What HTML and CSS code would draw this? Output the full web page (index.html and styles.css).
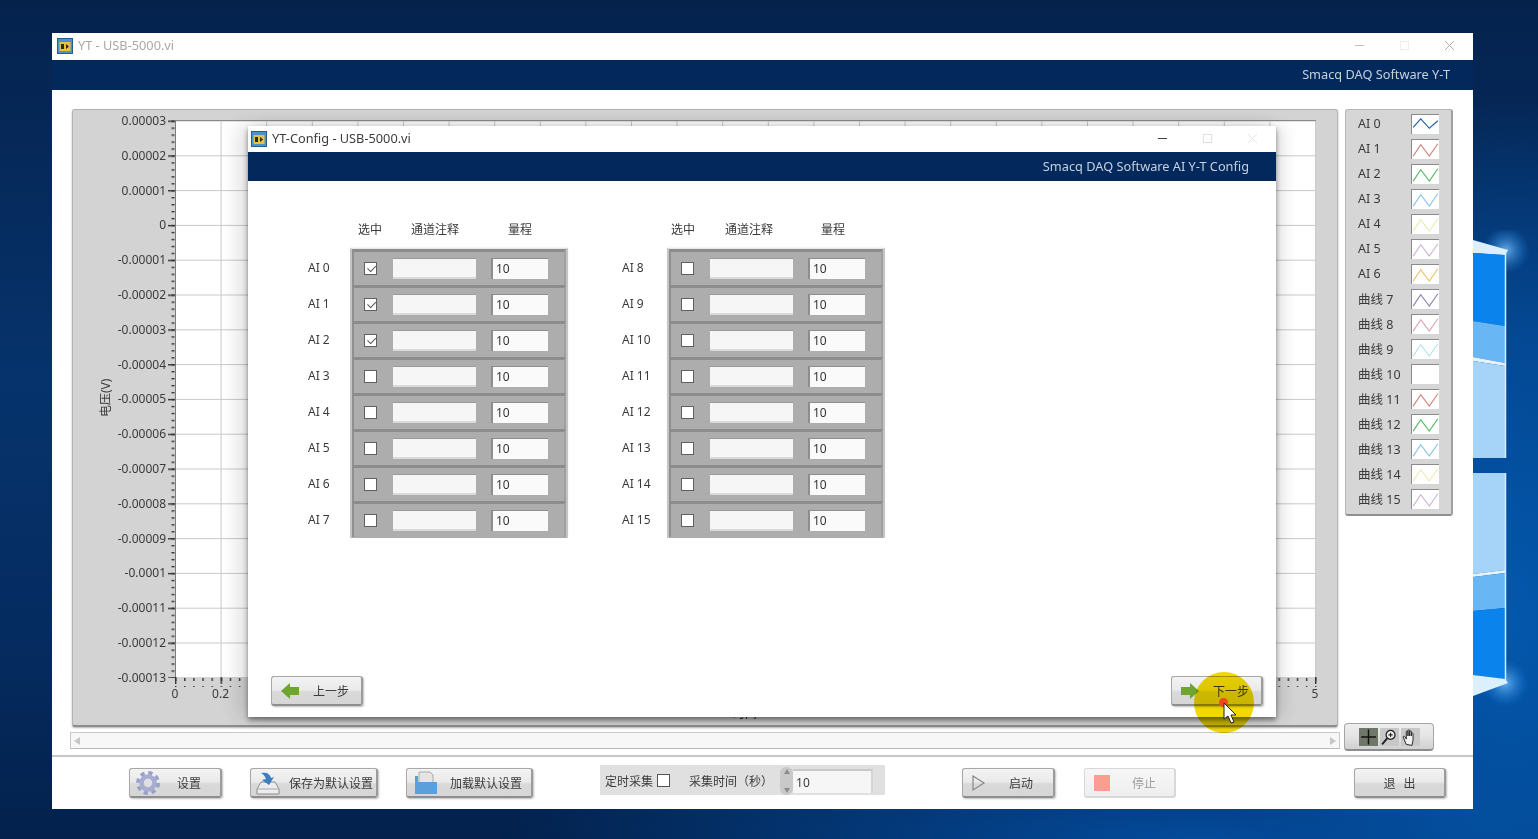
FILE: index.html
```html
<!DOCTYPE html>
<html lang="zh">
<head>
<meta charset="utf-8">
<title>YT - USB-5000.vi</title>
<link rel="stylesheet" href="styles.css">
</head>
<body>
<div class="desktop">
  <svg class="win-logo" viewBox="0 0 65 490" width="65" height="490">
    <defs>
      <radialGradient id="glow"><stop offset="0" stop-color="#7cc4fc" stop-opacity=".8"/><stop offset="1" stop-color="#1a7fe0" stop-opacity="0"/></radialGradient>
    </defs>
    <circle cx="33" cy="20" r="24" fill="url(#glow)"/>
    <circle cx="32" cy="453" r="24" fill="url(#glow)"/>
    <polygon points="0,10 35,20 32,25 0,23" fill="#dceffd"/>
    <polygon points="0,23 32,25 32,96 0,91" fill="#0a83ec"/>
    <polygon points="0,91 32,96 32,133 0,127" fill="#69b6f4"/>
    <polygon points="0,127 32,133 32,136 0,131" fill="#e4f3fe"/>
    <polygon points="0,131 32,136 32,228 0,228" fill="#a6d3f8"/>
    <polygon points="0,243 32,243 32,340 0,344" fill="#a6d3f8"/>
    <polygon points="0,344 32,340 32,343 0,347" fill="#e4f3fe"/>
    <polygon points="0,347 32,343 32,378 0,381" fill="#69b6f4"/>
    <polygon points="0,381 32,378 32,449 0,445" fill="#0a83ec"/>
    <polygon points="0,445 32,449 35,453 0,466" fill="#dceffd"/>
    <path d="M32.500 22V228M32.500 243V452" stroke="#d6edfd" stroke-width="1.500"/>
  </svg>

  <section class="window main-window">
    <header class="titlebar">
      <svg class="vi-icon" viewBox="0 0 16 16"><rect x=".5" y=".5" width="15" height="15" fill="#4b93c9" stroke="#1f5f94"/><rect x="2.5" y="4" width="11" height="9" fill="#e8c23a"/><path d="M4 6h3v5H4zM9 6l3 2.5L9 11z" fill="#2b2b20"/></svg>
      <span class="title-text faded">YT - USB-5000.vi</span>
      <div class="win-controls faded-controls">
        <svg viewBox="0 0 12 12"><path d="M1 6h10" stroke="#b9b9b9" stroke-width="1"/></svg>
        <svg viewBox="0 0 12 12"><rect x="1.5" y="1.5" width="9" height="9" fill="none" stroke="#ececec"/></svg>
        <svg viewBox="0 0 12 12"><path d="M1 1l10 10M11 1L1 11" stroke="#a9a9a9" stroke-width="1"/></svg>
      </div>
    </header>
    <div class="brandbar">Smacq DAQ Software Y-T</div>

    <div class="main-body">
      <div class="graph-row">
        <div class="graph-col">
          <div class="graph-panel">
            <div class="y-title">电压(V)</div>
            <div class="y-labels">
              <span>0.00003</span><span>0.00002</span><span>0.00001</span><span>0</span>
              <span>-0.00001</span><span>-0.00002</span><span>-0.00003</span><span>-0.00004</span>
              <span>-0.00005</span><span>-0.00006</span><span>-0.00007</span><span>-0.00008</span>
              <span>-0.00009</span><span>-0.0001</span><span>-0.00011</span><span>-0.00012</span>
              <span>-0.00013</span>
            </div>
            <div class="plot-wrap">
              <svg class="plot" viewBox="0 0 1150 568" width="1150" height="568">
                <defs>
                  <pattern id="grid" x="8" y="0.5" width="45.6" height="34.8" patternUnits="userSpaceOnUse">
                    <path d="M.5 0V34.8M0 .5H45.6" stroke="#c9c9c9" fill="none"/>
                  </pattern>
                  <pattern id="ytick" x="0" y="0.5" width="8" height="6.96" patternUnits="userSpaceOnUse">
                    <path d="M4.5 0h3v1.4h-3z" fill="#333"/>
                  </pattern>
                  <pattern id="xtick" x="8" y="557" width="9.12" height="8" patternUnits="userSpaceOnUse">
                    <path d="M0 1h1.4v3H0z" fill="#333"/>
                  </pattern>
                  <pattern id="ymajor" x="0" y="0.5" width="8" height="34.8" patternUnits="userSpaceOnUse">
                    <path d="M1 0h7v1.4H1z" fill="#333"/>
                  </pattern>
                  <pattern id="xmajor" x="8" y="557" width="45.6" height="10" patternUnits="userSpaceOnUse">
                    <path d="M0 0h1.4v7H0z" fill="#333"/>
                  </pattern>
                </defs>
                <rect x="8" y="0" width="1141" height="557" fill="#fff"/>
                <rect x="8" y="0" width="1141" height="557" fill="url(#grid)"/>
                <path d="M8.5 0V557" stroke="#7d7d7d"/>
                <path d="M8 .5H1149" stroke="#8a8a8a"/>
                <rect x="0" y="0" width="8" height="558" fill="url(#ytick)"/>
                <rect x="0" y="0" width="8" height="558" fill="url(#ymajor)"/>
                <rect x="8" y="557" width="1142" height="10" fill="url(#xtick)"/>
                <rect x="8" y="557" width="1142" height="10" fill="url(#xmajor)"/>
              </svg>
              <div class="x-labels"><span>0</span><span>0.2</span><span class="x-end">5</span><span class="x-title">时间</span></div>
            </div>
          </div>
          <div class="hscroll">
            <span class="arrow-left"></span>
            <span class="arrow-right"></span>
          </div>
        </div>

        <div class="side-col">
          <div class="legend">
            <div class="legend-row"><span>AI 0</span><svg class="swatch" viewBox="0 0 28 20"><path class="trace" stroke="#1f5f9e" d="M1 13 9 4l9 10 9-8"/></svg></div>
            <div class="legend-row"><span>AI 1</span><svg class="swatch" viewBox="0 0 28 20"><path class="trace" stroke="#d0827c" d="M1 17 9 5l9 12 9-13"/></svg></div>
            <div class="legend-row"><span>AI 2</span><svg class="swatch" viewBox="0 0 28 20"><path class="trace" stroke="#55b865" d="M1 17 9 5l9 12 9-13"/></svg></div>
            <div class="legend-row"><span>AI 3</span><svg class="swatch" viewBox="0 0 28 20"><path class="trace" stroke="#87c4e4" d="M1 17 9 5l9 12 9-13"/></svg></div>
            <div class="legend-row"><span>AI 4</span><svg class="swatch" viewBox="0 0 28 20"><path class="trace" stroke="#ecebb4" d="M1 17 9 5l9 12 9-13"/></svg></div>
            <div class="legend-row"><span>AI 5</span><svg class="swatch" viewBox="0 0 28 20"><path class="trace" stroke="#cdb5d6" d="M1 17 9 5l9 12 9-13"/></svg></div>
            <div class="legend-row"><span>AI 6</span><svg class="swatch" viewBox="0 0 28 20"><path class="trace" stroke="#e8c56a" d="M1 17 9 5l9 12 9-13"/></svg></div>
            <div class="legend-row"><span>曲线 7</span><svg class="swatch" viewBox="0 0 28 20"><path class="trace" stroke="#8585b0" d="M1 17 9 5l9 12 9-13"/></svg></div>
            <div class="legend-row"><span>曲线 8</span><svg class="swatch" viewBox="0 0 28 20"><path class="trace" stroke="#d8a3b8" d="M1 17 9 5l9 12 9-13"/></svg></div>
            <div class="legend-row"><span>曲线 9</span><svg class="swatch" viewBox="0 0 28 20"><path class="trace" stroke="#b5e2ea" d="M1 17 9 5l9 12 9-13"/></svg></div>
            <div class="legend-row"><span>曲线 10</span><svg class="swatch" viewBox="0 0 28 20"></svg></div>
            <div class="legend-row"><span>曲线 11</span><svg class="swatch" viewBox="0 0 28 20"><path class="trace" stroke="#d0827c" d="M1 17 9 5l9 12 9-13"/></svg></div>
            <div class="legend-row"><span>曲线 12</span><svg class="swatch" viewBox="0 0 28 20"><path class="trace" stroke="#55b865" d="M1 17 9 5l9 12 9-13"/></svg></div>
            <div class="legend-row"><span>曲线 13</span><svg class="swatch" viewBox="0 0 28 20"><path class="trace" stroke="#87c4e4" d="M1 17 9 5l9 12 9-13"/></svg></div>
            <div class="legend-row"><span>曲线 14</span><svg class="swatch" viewBox="0 0 28 20"><path class="trace" stroke="#ecebb4" d="M1 17 9 5l9 12 9-13"/></svg></div>
            <div class="legend-row"><span>曲线 15</span><svg class="swatch" viewBox="0 0 28 20"><path class="trace" stroke="#cdb5d6" d="M1 17 9 5l9 12 9-13"/></svg></div>
          </div>
          <div class="palette">
            <svg class="tool tool-on" viewBox="0 0 18 16"><path d="M9 1v14M2 8h14" stroke="#111" stroke-width="1.4"/></svg>
            <svg class="tool" viewBox="0 0 18 16"><circle cx="10" cy="6" r="4.2" fill="#eee" stroke="#222" stroke-width="1.2"/><path d="M7 9l-5 6" stroke="#222" stroke-width="1.8"/><path d="M8 6h4M10 4v4" stroke="#222"/></svg>
            <svg class="tool" viewBox="0 0 18 16"><path d="M5 15 2 8c0-1 1-1 2 0l1 2V3c0-1 1.600-1 1.600 0v4-5c0-1 1.600-1 1.600 0v5-4c0-1 1.600-1 1.600 0v4-2c0-1 1.600-1 1.600 0v6l-1 5z" fill="#f2f2f2" stroke="#222" stroke-width=".9"/></svg>
          </div>
        </div>
      </div>

      <footer class="toolbar">
        <button class="btn btn-settings">
          <svg class="btn-icon" viewBox="0 0 24 24"><circle cx="12" cy="12" r="10" fill="none" stroke="#9aa1c9" stroke-width="4" stroke-dasharray="4.200 3.650"/><circle cx="12" cy="12" r="6.500" fill="none" stroke="#a7add0" stroke-width="4.500"/><circle cx="12" cy="12" r="3.500" fill="#dedfe6"/></svg>
          <span class="btn-label">设置</span>
        </button>
        <button class="btn btn-save">
          <svg class="btn-icon" viewBox="0 0 24 24"><path d="M5 11 1 18v5h22v-5l-4-7z" fill="#ececec" stroke="#8a8a8a"/><path d="M2 18h20" stroke="#aaa"/><path d="M5 2c6-1 9 1 10 5l3-1-5 8-7-5 4-1C9 5 7 3 5 2z" fill="#3f7fc0"/></svg>
          <span class="btn-label">保存为默认设置</span>
        </button>
        <button class="btn btn-load">
          <svg class="btn-icon" viewBox="0 0 24 24"><path d="M5 1h11l3 3v9H5z" fill="#e4e4e4" stroke="#aaa"/><path d="M1 5h3v6h19v12H1z" fill="#5b9fdc"/></svg>
          <span class="btn-label">加载默认设置</span>
        </button>
        <div class="timer-box">
          <label class="timer-label">定时采集<span class="check"></span></label>
          <span class="timer-time">采集时间（秒）</span>
          <span class="spinner"><i class="up"></i><i class="down"></i></span>
          <span class="timer-input">10</span>
        </div>
        <button class="btn btn-start">
          <svg class="btn-icon small" viewBox="0 0 16 18"><path d="M2 2l11 7-11 7z" fill="none" stroke="#888" stroke-width="1.200"/></svg>
          <span class="btn-label">启动</span>
        </button>
        <button class="btn btn-stop">
          <span class="stop-square"></span>
          <span class="btn-label">停止</span>
        </button>
        <button class="btn btn-exit"><span class="btn-label">退 出</span></button>
      </footer>
    </div>
  </section>

  <section class="window config-window">
    <header class="titlebar config-title">
      <svg class="vi-icon" viewBox="0 0 16 16"><rect x=".5" y=".5" width="15" height="15" fill="#4b93c9" stroke="#1f5f94"/><rect x="2.5" y="4" width="11" height="9" fill="#e8c23a"/><path d="M4 6h3v5H4zM9 6l3 2.5L9 11z" fill="#2b2b20"/></svg>
      <span class="title-text">YT-Config - USB-5000.vi</span>
      <div class="win-controls">
        <svg viewBox="0 0 12 12"><path d="M1 6h10" stroke="#333" stroke-width="1"/></svg>
        <svg viewBox="0 0 12 12"><rect x="1.500" y="1.500" width="9" height="9" fill="none" stroke="#dcdcdc"/></svg>
        <svg viewBox="0 0 12 12"><path d="M1 1l10 10M11 1L1 11" stroke="#e0e0e0" stroke-width="1"/></svg>
      </div>
    </header>
    <div class="brandbar config-brand">Smacq DAQ Software AI Y-T Config</div>

    <div class="config-body">
      <div class="channel-groups">
        <div class="channel-group">
          <div class="labels-col">
            <span>AI 0</span><span>AI 1</span><span>AI 2</span><span>AI 3</span><span>AI 4</span><span>AI 5</span><span>AI 6</span><span>AI 7</span>
          </div>
          <div class="table-col">
            <div class="table-head"><span class="h-sel">选中</span><span class="h-note">通道注释</span><span class="h-range">量程</span></div>
            <div class="table">
              <div class="row"><span class="cb on"></span><span class="note"></span><span class="range">10</span></div>
              <div class="row"><span class="cb on"></span><span class="note"></span><span class="range">10</span></div>
              <div class="row"><span class="cb on"></span><span class="note"></span><span class="range">10</span></div>
              <div class="row"><span class="cb"></span><span class="note"></span><span class="range">10</span></div>
              <div class="row"><span class="cb"></span><span class="note"></span><span class="range">10</span></div>
              <div class="row"><span class="cb"></span><span class="note"></span><span class="range">10</span></div>
              <div class="row"><span class="cb"></span><span class="note"></span><span class="range">10</span></div>
              <div class="row"><span class="cb"></span><span class="note"></span><span class="range">10</span></div>
            </div>
          </div>
        </div>
        <div class="channel-group group-right">
          <div class="labels-col">
            <span>AI 8</span><span>AI 9</span><span>AI 10</span><span>AI 11</span><span>AI 12</span><span>AI 13</span><span>AI 14</span><span>AI 15</span>
          </div>
          <div class="table-col">
            <div class="table-head"><span class="h-sel">选中</span><span class="h-note">通道注释</span><span class="h-range">量程</span></div>
            <div class="table">
              <div class="row"><span class="cb"></span><span class="note"></span><span class="range">10</span></div>
              <div class="row"><span class="cb"></span><span class="note"></span><span class="range">10</span></div>
              <div class="row"><span class="cb"></span><span class="note"></span><span class="range">10</span></div>
              <div class="row"><span class="cb"></span><span class="note"></span><span class="range">10</span></div>
              <div class="row"><span class="cb"></span><span class="note"></span><span class="range">10</span></div>
              <div class="row"><span class="cb"></span><span class="note"></span><span class="range">10</span></div>
              <div class="row"><span class="cb"></span><span class="note"></span><span class="range">10</span></div>
              <div class="row"><span class="cb"></span><span class="note"></span><span class="range">10</span></div>
            </div>
          </div>
        </div>
      </div>
      <div class="config-actions">
        <button class="btn btn-nav">
          <svg class="arrow-icon" viewBox="0 0 20 18"><path d="M1 9 10 1v4h9v8h-9v4z" fill="#6da52f"/></svg>
          <span class="btn-label">上一步</span>
        </button>
        <button class="btn btn-nav">
          <svg class="arrow-icon" viewBox="0 0 20 18"><path d="M19 9 10 1v4H1v8h9v4z" fill="#6da52f"/></svg>
          <span class="btn-label">下一步</span>
        </button>
      </div>
    </div>
  </section>

  <div class="cursor-spot"></div>
  <span class="cursor-dot"></span>
  <svg class="cursor-arrow" viewBox="0 0 14 22"><path d="M1 1v16l4-3 3 7 3-1-3-7h5z" fill="#fff" stroke="#222"/></svg>
</div>
</body>
</html>
```

FILE: styles.css
```css
* { box-sizing: border-box; }
html, body { margin: 0; height: 100%; }
body { overflow: hidden; font-family: "Noto Sans", "Noto Sans CJK SC", sans-serif; color: #333; }

.desktop {
  position: relative;
  width: 1538px;
  height: 839px;
  overflow: hidden;
  background:
    radial-gradient(ellipse 300px 520px at 1510px 620px, #0358ad 0%, rgba(3,78,158,.8) 55%, rgba(3,60,130,0) 100%),
    radial-gradient(ellipse 700px 120px at 1200px 839px, rgba(3,80,165,.9) 0%, rgba(3,70,150,0) 100%),
    linear-gradient(180deg, #05224d 0%, #06336c 45%, #052c61 75%, #03214c 100%);
  filter: blur(.45px);
}

.win-logo { position: absolute; left: 1473px; top: 230px; filter: blur(.5px); }

.window { position: absolute; background: #fff; display: flex; flex-direction: column; }
.main-window { left: 52px; top: 33px; width: 1421px; height: 776px; }
.config-window { left: 248px; top: 126px; width: 1028px; height: 591px; box-shadow: -10px 0 18px rgba(0,0,0,.12), 0 3px 5px rgba(0,0,0,.45), 8px 0 14px rgba(0,0,0,.1); }

.titlebar { height: 27px; flex: none; display: flex; align-items: center; padding-left: 5px; padding-bottom: 3px; background: #fff; }
.config-title { height: 26px; padding-left: 3px; padding-bottom: 2px; }
.titlebar .vi-icon { margin-top: 2px; }
.vi-icon { width: 16px; height: 16px; flex: none; }
.title-text { margin-left: 5px; font-size: 12.75px; color: #3d3d3d; }
.title-text.faded { color: #a9a9a9; }
.win-controls { margin-left: auto; display: flex; gap: 34px; padding-right: 18px; }
.win-controls svg { width: 11px; height: 11px; }
.config-title .win-controls { padding-right: 18px; }

.brandbar {
  height: 30px; flex: none; background: #02285c;
  color: #c6d0dc; font-size: 12.75px; line-height: 29px; text-align: right; padding-right: 23px;
}
.config-brand { height: 29px; padding-right: 27px; line-height: 29px; }

.main-body { flex: 1; display: flex; flex-direction: column; padding-top: 19px; }
.graph-row { display: flex; padding-left: 18px; height: 646px; flex: none; }
.graph-col { width: 1270px; display: flex; flex-direction: column; }

.graph-panel {
  margin-left: 2px; width: 1266px; height: 618px; flex: none;
  background: #d4d3d4;
  border-radius: 3px;
  border: 1px solid #b4b4b4;
  border-bottom: 2px solid #8d8d8d;
  box-shadow: 0 1px 2px rgba(0,0,0,.3);
  display: flex;
  align-items: flex-start;
  padding-top: 10px;
  position: relative;
}
.y-title {
  width: 22px; margin-left: 23px; margin-top: 256px; flex: none;
  writing-mode: vertical-rl; text-orientation: sideways; transform: rotate(180deg);
  font-size: 12px; color: #3a3a3a; text-align: center; height: 44px; white-space: nowrap;
}
.y-labels { width: 48px; flex: none; display: flex; flex-direction: column; align-items: flex-end; margin-top: -8px; }
.y-labels span { height: 34.8px; line-height: 18px; font-size: 12px; color: #3a3a3a; flex: none; }
.plot-wrap { width: 1150px; flex: none; margin-left: 1px; }
.plot { display: block; }
.x-labels { position: relative; height: 16px; font-size: 12px; color: #3a3a3a; margin-top: -3px; }
.x-labels span { position: absolute; top: 0; transform: translateX(-50%); left: 8px; }
.x-labels span:nth-child(2) { left: 53.6px; }
.x-labels .x-end { left: 1148px; }
.x-labels .x-title { left: 578px; top: 19px; white-space: nowrap; }

.hscroll {
  margin-top: 5px; height: 17px; width: 1270px; flex: none;
  background: #f7f7f7; border: 1px solid #c9c9c9;
  border-bottom: 1.500px solid #bbb;
  display: flex; justify-content: space-between; align-items: center; padding: 0 3px;
}
.arrow-left { width: 0; height: 0; border: 4px solid transparent; border-right: 6px solid #c6c6c6; border-left: 0; }
.arrow-right { width: 0; height: 0; border: 4px solid transparent; border-left: 6px solid #c6c6c6; border-right: 0; }

.side-col { margin-left: 5px; width: 108px; display: flex; flex-direction: column; }
.legend {
  height: 407px; width: 108px; flex: none;
  background: #d6d6d6;
  border: 1px solid #b5b5b5; border-bottom: 2px solid #8f8f8f; border-right: 2px solid #9f9f9f;
  border-radius: 3px;
  padding: 1px 12px 0 12px;
  display: flex; flex-direction: column;
}
.legend-row { height: 25px; display: flex; align-items: center; justify-content: space-between; font-size: 12.5px; color: #3a3a3a; flex: none; }
.swatch { width: 28px; height: 20px; background: #fff; border-top: 1px solid #8b8b8b; border-left: 1px solid #8b8b8b; }
.trace { fill: none; stroke-width: 1.2; }

.palette {
  margin-top: 207px; margin-left: -1px; width: 90px; height: 28px; flex: none;
  background: linear-gradient(180deg, #eeeeee 0%, #e4e4e4 50%, #d0d0d0 100%);
  border: 1px solid #a5a5a5; border-bottom: 2px solid #8c8c8c; border-radius: 4px;
  display: flex; align-items: center; padding-left: 14px; gap: 2px;
}
.tool { width: 19px; height: 18px; background: #c8c8c8; }
.tool-on { background: #6f7868; }

.toolbar {
  flex: 1; border-top: 2px solid #c8c8c8;
  display: flex; align-items: flex-start; padding: 11px 0 0 77px;
}
.btn {
  position: relative; display: flex; align-items: center; justify-content: center;
  height: 30px; padding: 0; font: inherit; font-size: 12px; color: #3b3b3b;
  background: linear-gradient(180deg, #f3f3f3 0%, #eaeaea 48%, #d9d9d9 55%, #d6d6d6 100%);
  border: 1px solid #a8a8a8; border-bottom: 2px solid #8e8e8e; border-right: 2px solid #9b9b9b;
  border-radius: 3px;
  box-shadow: 1px 1px 2px rgba(0,0,0,.25);
}
.btn-icon { width: 24px; height: 24px; flex: none; }
.btn-icon.small { width: 16px; height: 18px; }
.btn-settings { width: 93px; justify-content: flex-start; padding-left: 6px; }
.btn-settings .btn-label { margin-left: 17px; }
.btn-save { width: 128px; margin-left: 28px; justify-content: flex-start; padding-left: 5px; }
.btn-save .btn-label { margin-left: 9px; }
.btn-load { width: 127px; margin-left: 28px; justify-content: flex-start; padding-left: 7px; }
.btn-load .btn-label { margin-left: 12px; }

.timer-box {
  margin-left: 67px; margin-top: -3px; width: 285px; height: 30px;
  background: #e0e0e0; display: flex; align-items: center; padding: 1px 0 0 5px; font-size: 12px; color: #3b3b3b;
}
.timer-label { display: flex; align-items: center; gap: 4px; }
.check { width: 13px; height: 13px; background: #fff; border: 1px solid #555; }
.timer-time { margin-left: 19px; white-space: nowrap; width: 84px; flex: none; }
.spinner { margin-left: 7px; width: 13px; height: 28px; display: flex; flex-direction: column; justify-content: space-between; align-items: center; background: #c9c9c9; border-radius: 6px; padding: 2px 0; flex: none; }
.spinner i { width: 0; height: 0; border: 3px solid transparent; }
.spinner .up { border-bottom: 5px solid #8c8c8c; border-top: 0; }
.spinner .down { border-top: 5px solid #8c8c8c; border-bottom: 0; }
.timer-input { width: 80px; height: 24px; background: #f6f6f6; line-height: 23px; padding-left: 3px; border-top: 2px solid #c9c9c9; border-right: 2px solid #d4d4d4; }

.btn-start { width: 93px; margin-left: 77px; justify-content: flex-start; padding-left: 8px; }
.btn-start .btn-label { margin-left: 22px; }
.btn-stop { width: 92px; margin-left: 29px; justify-content: flex-start; padding-left: 9px; background: linear-gradient(180deg,#f7f7f7,#eeeeee); border-color: #d8d8d8; color: #9d9d9d; box-shadow: none; }
.btn-stop .btn-label { margin-left: 22px; }
.stop-square { width: 16px; height: 16px; background: #fb9d91; flex: none; }
.btn-exit { width: 92px; margin-left: 178px; word-spacing: 5px; }

.config-body { flex: 1; display: flex; flex-direction: column; justify-content: space-between; padding-bottom: 11px; }
.channel-groups { display: flex; padding-top: 39px; padding-left: 60px; gap: 54px; }
.channel-group { display: flex; }
.labels-col { width: 42px; flex: none; padding-top: 31px; display: flex; flex-direction: column; }
.group-right .labels-col { width: 45px; }
.labels-col span { height: 36px; line-height: 36px; font-size: 12px; color: #3a3a3a; margin-top: -1px; margin-bottom: 1px; }
.table-col { display: flex; flex-direction: column; }
.table-head { height: 28px; position: relative; font-size: 12px; color: #3a3a3a; }
.table-head span { position: absolute; top: 0; transform: translateX(-50%); }
.h-sel { left: 20px; } .h-note { left: 85px; } .h-range { left: 170px; }
.group-right .h-sel { left: 16px; } .group-right .h-note { left: 82px; } .group-right .h-range { left: 166px; }
.table { width: 218px; height: 290px; background: #adadad; border-top: 1px solid #e6e6e6; border-left: 2px solid #c4c4c4; border-right: 2px solid #c4c4c4; box-shadow: 0 -1px 2px rgba(0,0,0,.06); }
.row {
  height: 36px; display: flex; align-items: center;
  border-top: 3px solid #8c8c8c; border-left: 2px solid #8f8f8f; border-right: 2px solid #a0a0a0;
  padding-left: 10px;
}
.cb { width: 13px; height: 13px; background: #fff; border: 1px solid #5f5f5f; flex: none; position: relative; }
.cb.on::after { content: ""; position: absolute; left: 2px; top: 0; width: 7px; height: 4px; border-left: 1.300px solid #555; border-bottom: 1.300px solid #555; transform: rotate(-45deg) translate(-1px, 2px); }
.note { width: 83px; height: 21px; margin-left: 16px; background: #f6f6f6; border-bottom: 2px solid #dadada; border-top: 1px solid #9a9a9a; flex: none; }
.range { width: 57px; height: 21px; margin-left: 15px; background: #fafafa; font-size: 12px; line-height: 20px; padding-left: 3px; border-top: 1px solid #8d8d8d; border-left: 2px solid #8d8d8d; color: #333; flex: none; }

.config-actions { display: flex; justify-content: space-between; padding: 0 13px 0 23px; }
.btn-nav { width: 92px; justify-content: flex-start; padding-left: 8px; }
.btn-nav .btn-label { margin-left: 13px; }
.arrow-icon { width: 20px; height: 18px; flex: none; }

.cursor-spot { position: absolute; left: 1194px; top: 672px; width: 60px; height: 61px; border-radius: 50%; background: #f0d800; mix-blend-mode: multiply; }
.cursor-dot { position: absolute; left: 1219px; top: 698px; width: 9px; height: 9px; border-radius: 50%; background: #f4471c; }
.cursor-arrow { position: absolute; left: 1223px; top: 702px; width: 14px; height: 22px; }
```
